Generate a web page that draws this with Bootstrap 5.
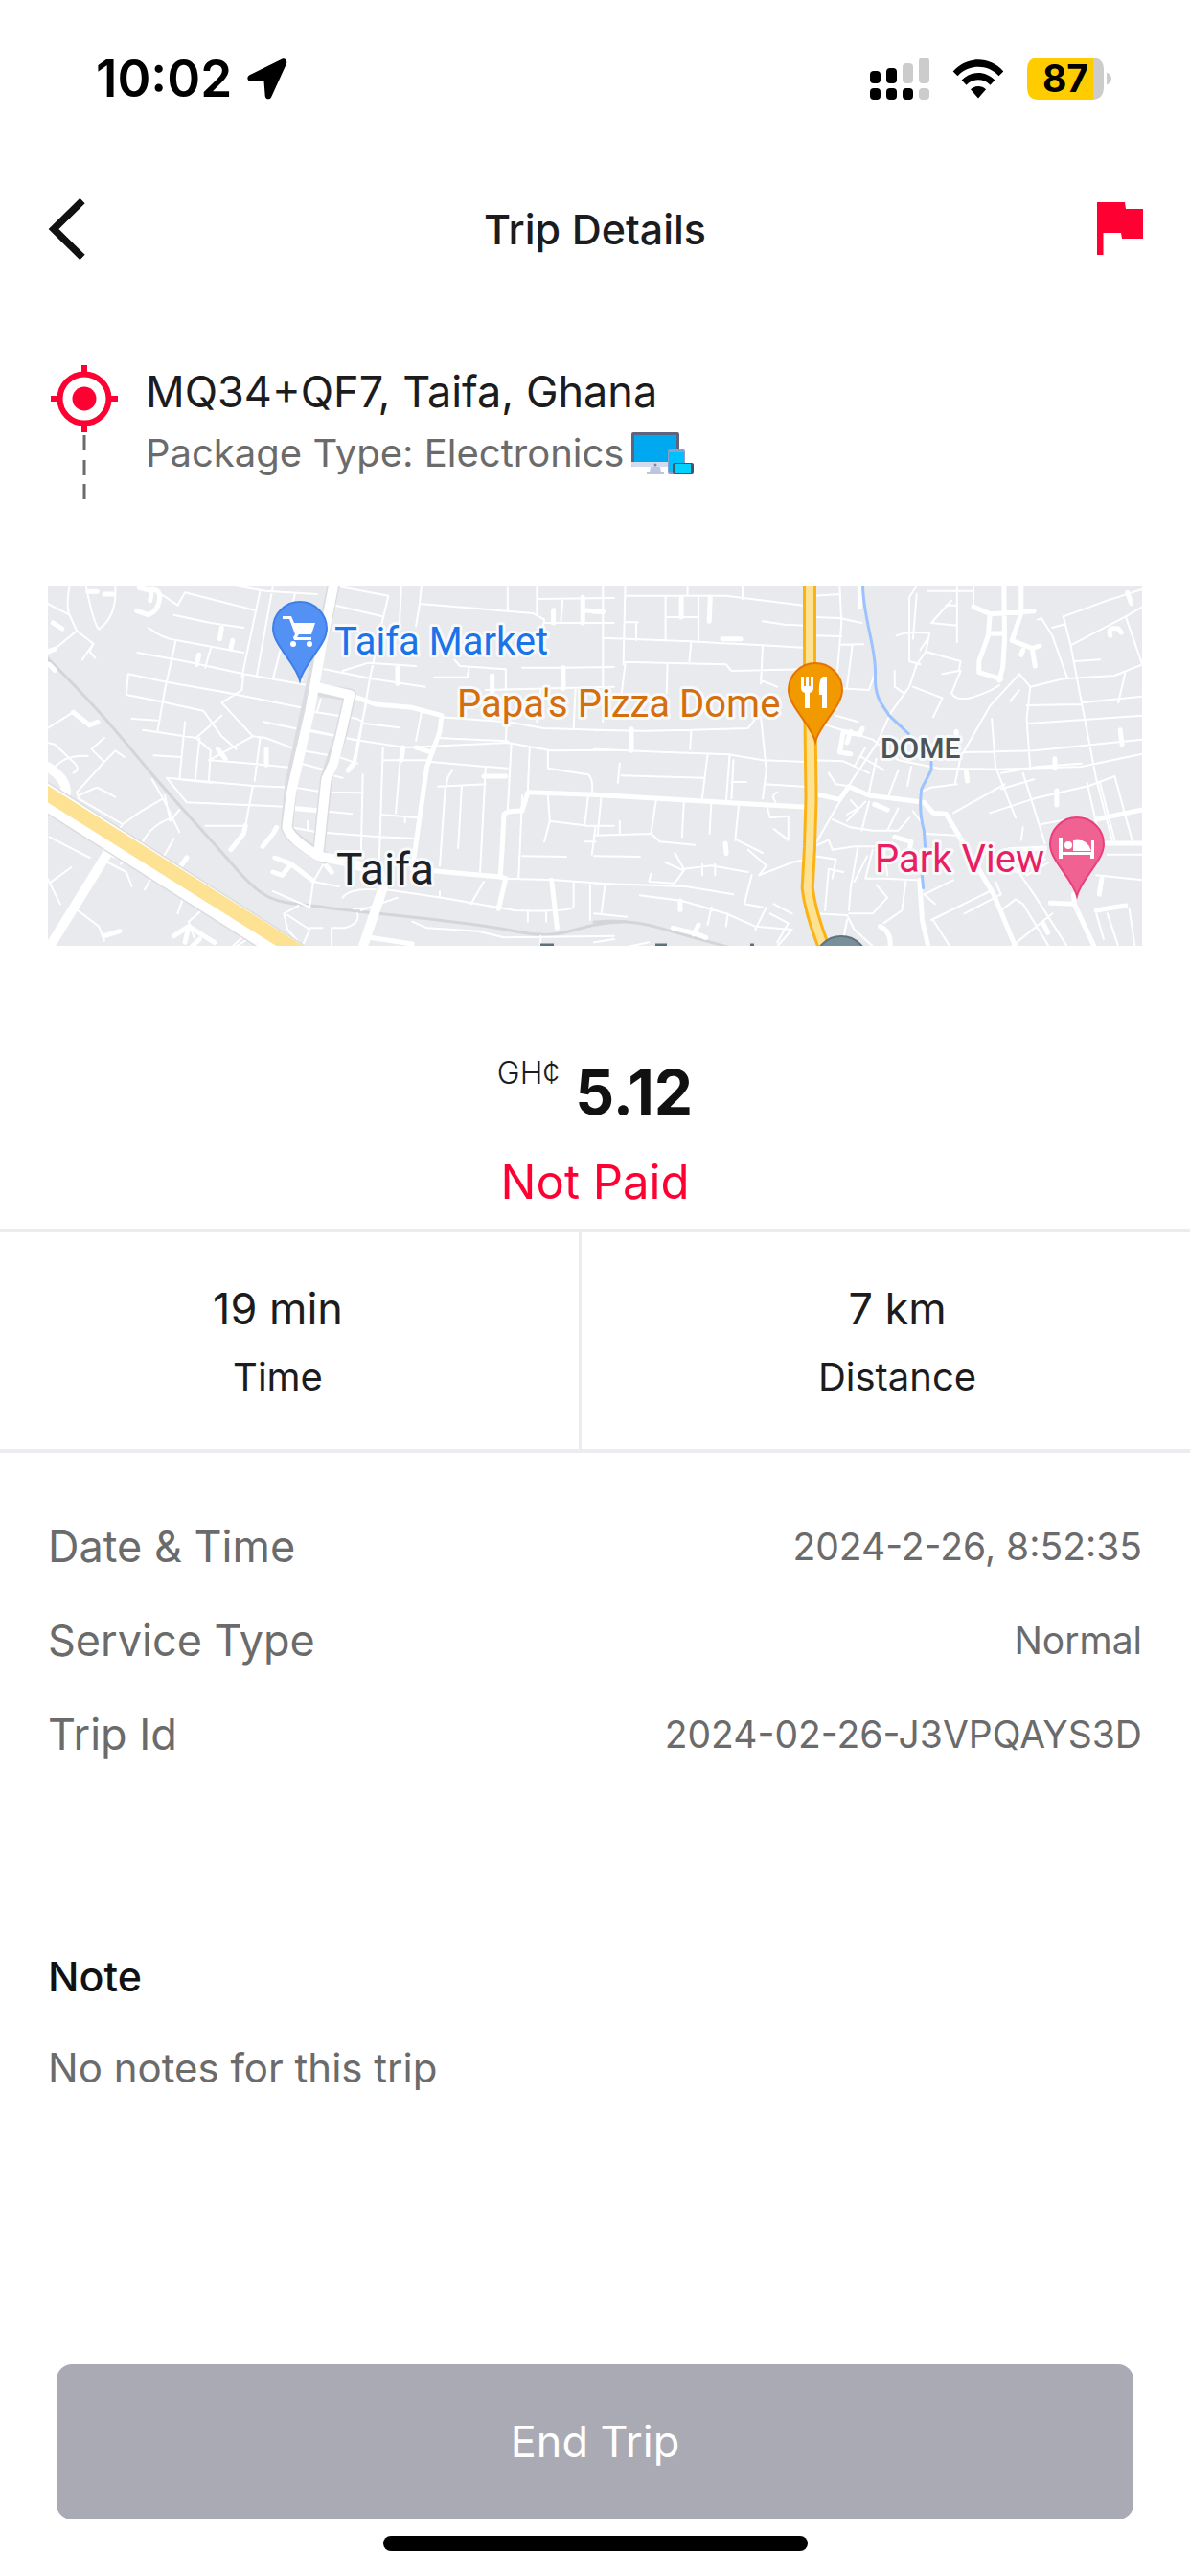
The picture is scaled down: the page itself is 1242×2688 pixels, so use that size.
<!DOCTYPE html>
<html lang="en">
<head>
<meta charset="utf-8">
<meta name="viewport" content="width=device-width, initial-scale=1">
<title>Trip Details</title>
<link href="https://cdn.jsdelivr.net/npm/bootstrap@5.3.0/dist/css/bootstrap.min.css" rel="stylesheet">
<script src="https://cdn.jsdelivr.net/npm/bootstrap@5.3.0/dist/js/bootstrap.bundle.min.js"></script>
<style>
  :root { --ink: #1c1c1e; --muted: #6b6b6b; --accent: #ff0033; --line: #ebebf0; }
  body { font-family: Inter, "Liberation Sans", sans-serif; color: var(--ink); background: #fff; }
  svg { display: block; flex-shrink: 0; }
  .status-bar { height: 164px; padding: 0 82px 0 100px; }
  .clock { font-size: 53px; line-height: 64px; font-weight: 600; color: #000; }
  .battery { width: 88px; height: 44px; }
  .battery-value { position: absolute; inset: 0 8px 0 0; font-size: 39px; line-height: 44px; font-weight: 700; color: #000; text-align: center; }
  .top-bar { height: 150px; padding: 0 49px; }
  .text-title { font-size: 43px; line-height: 60px; font-weight: 500; }
  .text-label { font-size: 45px; line-height: 60px; font-weight: 400; }
  .text-sub { font-size: 40px; line-height: 60px; font-weight: 400; }
  .text-value { font-size: 39px; line-height: 60px; font-weight: 400; }
  .text-unit { font-size: 40px; line-height: 56px; font-weight: 400; }
  .muted { color: var(--muted); }
  .origin { padding: 67px 50px 0 52px; gap: 28px; }
  .origin-title { font-size: 45px; line-height: 60px; margin-top: -2px; margin-bottom: 4px; }
  .map-box { padding: 0 50px; margin-top: 88px; }
  .map-box svg { width: 100%; height: auto; background: #e8eaed; }
  .fare { padding-top: 105px; }
  .currency { font-size: 32px; line-height: 56px; font-weight: 300; }
  .amount { font-size: 64px; line-height: 96px; font-weight: 700; color: #111; }
  .unpaid { font-size: 49px; line-height: 68px; color: var(--accent); margin-top: 12px; margin-bottom: 14px; }
  .stats { border-top: 4px solid var(--line); border-bottom: 4px solid var(--line); height: 234px; }
  .stats > div { padding-top: 50px; }
  .stat-left { width: 607px; border-right: 3px solid var(--line); padding-right: 24px; }
  .stat-right { padding-left: 24px; }
  .stat-gap { margin-top: 13px; }
  .details { padding: 68px 50px 0; }
  .details > div { height: 98px; }
  .details dt, .details dd { margin: 0; }
  .note { padding: 154px 50px 0; }
  .note p { margin-top: 36px; font-size: 42px; line-height: 60px; }
  .note h2 { color: #111; font-size: 43px; line-height: 60px; font-weight: 500; }
  .footer-bar { padding: 0 59px 26px; }
  .end-btn { height: 162px; border-radius: 16px; background: #aaaab4; color: #fff; border: 0; }
  .end-btn:hover { background: #9c9ca8; color: #fff; }
  .home-bar { width: 443px; height: 16px; border-radius: 8px; background: #000; margin-top: 17px; }
  .road path { fill: none; stroke: #fff; stroke-linecap: round; stroke-linejoin: round; vector-effect: non-scaling-stroke; }
  .lane { stroke-width: 2px; }
  .road path.street { stroke-width: 5px; }
  .road path.avenue { stroke-width: 10px; }
  .road path.shade { stroke: #dadce0; stroke-width: 13px; }
  .road path.shade-wide { stroke: #dadce0; stroke-width: 29px; }
  .road path.rail { stroke: #d3d5d9; stroke-width: 3px; }
  .road path.hw-case { stroke: #fff; stroke-width: 26px; }
  .road path.hw { stroke: #fde293; stroke-width: 15px; stroke-linecap: butt; }
  .road path.trunk-case { stroke: #fbb214; stroke-width: 14px; stroke-linecap: butt; }
  .road path.trunk { stroke: #fde293; stroke-width: 8px; stroke-linecap: butt; }
  .road path.river { stroke: #9cc3ff; stroke-width: 3px; }
  .map-label { font-family: Roboto, "Liberation Sans", sans-serif; font-size: 40px; paint-order: stroke; stroke: #f8f9fa; stroke-width: 6px; stroke-linejoin: round; }
  .map-town { font-size: 46px; fill: #202124; }
  .map-area { font-size: 30px; font-weight: 500; fill: #4a5459; }
</style>
</head>
<body class="d-flex flex-column min-vh-100">

<div class="status-bar d-flex align-items-center justify-content-between">
  <div class="d-flex align-items-center">
    <span class="clock">10:02</span>
    <svg class="ms-3" width="42" height="43" viewBox="0 0 42 43" aria-hidden="true"><path d="M36 .8 2.5 17.2C-.8 19-.2 23.6 3.6 23.8L17.500 24 18.700 39C19 43 24 43.600 25.400 39.800L41 5.500C42.200 1.800 39-.7 36 .8Z"/></svg>
  </div>
  <div class="d-flex align-items-center">
    <svg width="62" height="44" viewBox="0 0 62 44" aria-label="Signal"><g><rect y="14" width="11" height="13" rx="4"/><rect x="17" y="11" width="11" height="16" rx="4"/><rect y="32" width="11" height="12" rx="4"/><rect x="17" y="32" width="11" height="12" rx="4"/><rect x="34" y="32" width="11" height="12" rx="4"/></g><g fill="#ccc"><rect x="34" y="6" width="11" height="21" rx="4"/><rect x="51" width="11" height="27" rx="4"/><rect x="51" y="32" width="11" height="12" rx="4"/></g></svg>
    <svg class="mx-4" width="54" height="41" viewBox="0 0 54 41" aria-label="Wi-Fi"><path d="M.7 12.500C15-3.700 39-3.700 53.300 12.500L48.500 17.300C37 4.700 17 4.700 5.500 17.300Z"/><path d="M9.700 21.500C19.500 11.500 34.500 11.500 44.300 21.500L39.500 26.800C32.500 19.500 21.500 19.500 14.500 26.800Z"/><path d="M19 31.200C23.500 27 30.500 27 35 31.200L27 40.500Z"/></svg>
    <div class="battery position-relative">
      <svg width="88" height="44" viewBox="0 0 88 44" aria-hidden="true"><path d="M12 0H69V44H12Q0 44 0 31V13Q0 0 12 0Z" fill="#ffcc00"/><path d="M69 0Q80 1 80 13V31Q80 43 69 44ZM83 15.500Q88 18 88 22T83 28.500Z" fill="#ccc"/></svg>
      <span class="battery-value">87</span>
    </div>
  </div>
</div>

<header class="top-bar d-flex align-items-center justify-content-between">
  <a href="#" aria-label="Back"><svg width="48" height="64" viewBox="0 0 48 64"><path d="M37 2.500 7 32 37 61.500" fill="none" stroke="#111" stroke-width="7.500"/></svg></a>
  <h1 class="text-title m-0">Trip Details</h1>
  <a href="#" aria-label="Report"><svg width="48" height="56" viewBox="0 0 48 56"><path d="M0 0H29L30 7H48V38H26L25 32H6.500V55H0Z" fill="#ff0033"/></svg></a>
</header>

<section class="origin d-flex align-items-start">
  <svg width="72" height="142" viewBox="0 0 72 142" aria-hidden="true"><g stroke="#ff0033" stroke-width="6" fill="none"><circle cx="36" cy="35" r="25.500"/><path d="M36 0V9M36 61V70M1 35H10M62 35H71"/></g><circle cx="36" cy="35" r="12.500" fill="#ff0033"/><path d="M36 73V89M36 99V115M36 124V140" stroke="#6b6b6b" stroke-width="3"/></svg>
  <div>
    <div class="origin-title">MQ34+QF7, Taifa, Ghana</div>
    <div class="d-flex align-items-center gap-2 text-sub muted">Package Type: Electronics
      <svg width="66" height="45" viewBox="0 0 66 45" aria-hidden="true"><rect width="50" height="36" rx="2" fill="#5c6480"/><rect x="3" y="3" width="44" height="28" fill="#00a8f0"/><path d="M0 31H50V34Q50 36 48 36H2Q0 36 0 34Z" fill="#d3dcee"/><path d="M20 36H30L31 42H34V44H16V42H19Z" fill="#bcc7df"/><circle cx="25" cy="34" r="1.500" fill="#7d88a5"/><rect x="38" y="18" width="18" height="26" rx="2" fill="#8aa0c8"/><rect x="39" y="21" width="16" height="20" fill="#00c0ff"/><rect x="43" y="32" width="22" height="12" rx="2" fill="#46506a"/><rect x="46" y="33" width="16" height="10" fill="#00d2ff"/></svg>
    </div>
  </div>
</section>

<section class="map-box">
<svg viewBox="0 0 1142 376" role="img" aria-label="Map of Taifa">
  <rect width="1142" height="376" fill="#e8eaed"/>
  <!-- west half -->
  <g class="road" transform="translate(-10 -11) scale(.38265 .33333)">
    <path class="rail" d="M20 255C150 400 220 500 300 610S450 800 540 920S660 1020 780 1040S1150 1080 1300 1115S1450 1090 1600 1085"/>
    <g class="lane">
      <path d="M85 34Q75 100 85 125L25 90M85 125 105 175 150 215 120 265M105 175 30 245M130 34Q150 150 165 170Q215 130 210 34M150 215 140 240 155 260M335 60 380 95 400 55 470 75 590 110M370 125 470 150 560 165M300 165Q340 200 380 205L560 243M270 243 400 270 560 310 760 350M245 310 240 375 330 395 450 425 500 505 540 545M245 310 350 335 500 365 730 418M500 400 585 505 465 580M500 400 555 360 560 310M540 34 620 50 760 60M605 50 555 320M640 34 595 320M700 60 640 325M720 330 700 300M375 205 345 360 325 490M470 230 455 290"/>
      <path d="M255 450 325 455M285 485 430 510 470 550 465 645M430 510 500 440M400 460 385 640M440 510 428 640M315 565 390 570M350 635 585 660 690 665M350 635 405 712 670 725M385 640 470 650M470 580 580 590 690 603M605 510 590 645M615 460 700 480 860 515 1000 540 1280 525 1400 550 1570 548M585 505 620 510 700 545 820 570M585 660 565 785 455 785M25 480 95 430M25 525 45 530 100 590Q115 610 95 620M45 600Q80 560 135 567M180 510 145 545 180 585 105 680 110 700 230 780 280 740 340 700 310 640M180 585 210 550 235 570M110 690 160 665 210 695M340 700 385 805M345 690 360 770 385 735M230 780 200 830M30 820 140 885M30 965 90 915M190 900 240 930 255 975M225 905 245 870M200 880 235 895M370 825 290 985M285 835Q310 780 365 760M410 960 380 1060M90 1035 165 1100 180 1145M460 1035 410 1085 425 1135 M460 1035 530 1080M25 950 60 1030"/>
      <path d="M810 34 955 65 935 160 905 320 865 585M990 34 985 160M810 95 940 130M1045 34 1040 90 1350 120 1380 140 1370 200M1040 90 1030 160M1280 40V110M1360 34V120M1360 75 1570 72M1430 80 1425 150M1380 150 1570 150M780 295 910 325 1055 350M830 300 900 275 1030 285M1080 320H1170L1175 290M1135 265 1150 285 1275 295V360M1320 290 1430 290 1570 288M1220 360 1570 350M1540 34V460M1465 360 1460 480M1370 360 1360 460M735 425 870 450 890 465 985 478M770 390 760 430M720 480 860 515M700 585 780 610M895 400 860 580M1045 430 1030 520M1100 445 1280 460 1380 480 1570 487M1280 400 1275 520 1290 530 1280 740M1090 510 1280 520M1340 540 1335 680M1390 550V605L1500 625Q1515 640 1510 690M940 540 930 890M940 580 1060 580M990 540 975 745M885 625 880 880M1070 585 1220 600 1280 605M1220 600 1205 930M1130 610Q1110 640 1115 660M1090 662 1220 655M1155 660 1145 855M1110 665 1095 910M820 570 870 590M830 635 780 620M700 665 780 680 885 682M770 738 855 748M690 790 760 805 930 820 1030 825M735 770V800M935 750 1035 760M1000 760V775M1320 690 1310 950M1390 690 1395 770 1380 835M1395 770 1500 785 1570 785M1500 690 1490 785 1520 785 1510 875M1320 880 1440 882M1490 835H1520M1270 950 1410 955 1570 968"/>
      <path d="M640 990 740 1040 750 960 780 900M950 985 1100 1010 1300 1050Q1450 1055 1460 1040V960M830 1010Q850 980 920 985M860 1045 930 1040M1215 960 1180 1030M1335 1050V1085M1385 1055V1085M1505 970V1080M1095 990V1010M710 1035 670 1060 680 1110 720 1162M680 1065 740 1110 720 1162M740 1105 775 1105M870 1060Q880 1090 835 1105H800V1162M1020 1085 1060 1105 1200 1115 1270 1135 1570 1130M1370 1130V1162M600 1120 540 1162M470 1040 540 1085M530 1162 580 1110M750 960 820 975M880 1050 980 1010"/>
    </g>
    <path class="street" d="M275 40 310 50 305 80M310 45Q335 45 330 80T300 125L268 112M135 52H160M180 60H205M25 240 45 232M30 280 45 298M40 150 65 168M500 165 495 200M530 205 525 232M438 250 432 280M95 430 140 470 162 460M490 545 510 575M622 545V595M860 590 845 612M1030 540 1070 555M995 540 990 580M1485 70V150M1485 110 1540 115M1405 110V150M1432 290V355M1238 315V370M980 290V340M1215 630H1275M565 785 560 810 525 860M650 790 640 810 612 850M645 885 690 905 665 940 640 930M690 905 750 958M785 910 800 930M405 885 388 912M180 1130 222 1115M370 1130 410 1100 400 1150M410 1100 480 1150M440 1140 420 1162"/>
    <path class="street" d="M860 380 920 405 1020 415 1100 440 1095 490 1060 600 1040 760 1020 920 1260 945 1265 860 1270 750Q1275 738 1320 738L1335 680 1570 690M1260 945 1275 950 1255 1045M1400 955 1415 1105M905 1135 1020 1155M690 730 770 738"/>
    <path class="shade" d="M805 34 690 650 678 790Q690 830 780 885M765 360 850 375 825 500 785 640 765 860"/>
    <path class="avenue" d="M805 34 775 210 740 430 690 680 678 790Q690 830 765 880L830 895 930 930 940 980 885 1165M755 350 850 375 825 500 805 590 785 640 765 860"/>
    <path class="avenue" d="M200 850 30 1165M25 600Q80 640 75 685"/>
    <path class="shade-wide" d="M0 680 700 1190"/>
    <path class="hw-case" d="M0 680 700 1190"/>
    <path class="hw" d="M-10 660 740 1200"/>
  </g>
  <!-- east half -->
  <g class="road" transform="translate(570 -11) scale(.38265 .33333)">
    <path class="rail" d="M0 1087Q90 1075 180 1105T400 1175"/>
    <g class="lane">
      <path d="M85 34 80 280M85 65H360L580 97M255 34V65M195 70V205M285 70V205M405 34V75M115 150V205M120 148H85M195 132H285M25 197 260 208 460 220 580 228M265 208 260 270M460 145 520 155 580 158M460 220 455 340M80 272 360 280 375 300 580 295M200 280 198 370M85 280 75 370M455 330 500 350M0 485 135 488 265 485 420 480 440 450M265 485 262 545M0 545 200 555 370 562 460 580 580 585M370 562 360 715M455 445 470 610 460 700M70 590 65 650M75 628 300 635M310 560 295 700M380 580 375 700M375 648H415M465 655 580 663M500 680Q480 690 495 710M20 690 10 810M70 770V810M170 700 155 810 180 835 275 845M0 815 155 810M245 710 240 820M320 710 315 810M395 715 385 830M470 715 480 760 530 755V830L490 795M0 880 125 882M220 870 245 920 320 910 420 930M195 900 245 925 220 965 150 960 155 935M295 905V940M330 905V940M420 860 470 910 450 940 540 900 580 890M390 830 460 870M0 965 250 975 380 1000M30 970 20 1060M0 1060 90 1070M125 1003 240 1020 360 1060 440 1100 540 1110M320 1040 310 1095M365 1060 360 1100M470 1040 440 1110M480 1060 530 1090 500 1150M490 1030 540 1060M540 1110 500 1162M0 1150 55 1140M100 1162 150 1150M430 940 410 1030 460 1040"/>
      <path d="M600 65 670 60M670 34 675 150 660 350M600 132 670 135 730 150M600 190 675 192M675 218 735 217M705 218 690 350M600 350 750 360 765 310M880 34 860 70V270L890 280M880 60 870 200M990 34V210M910 50H1030M1035 34V95M960 95H990M975 80 920 150 990 158M825 190Q850 175 915 182L905 240 1000 270 995 300 950 310M905 240 880 280 860 350 810 430 770 530 700 650 600 850M890 235 910 200M820 300V350L845 370M870 350 950 385 925 445M1000 300 975 370Q990 400 1040 380T1105 345M1160 310 1080 410 1000 570 985 650M1160 310 1190 350 1180 450 1190 610M1220 135 1250 190 1290 320M1210 140 1220 135M1250 165 1280 155M1280 130 1400 80 1495 45M1280 130 1300 220 1330 400 1370 640 1415 840M1300 220 1450 130 1495 100M1450 130 1495 280M1310 270 1380 265M1190 350 1280 325 1420 315 1495 280M1180 408 1330 405M1185 465 1495 440M1010 555 1200 550 1495 515M1330 400 1495 380M1450 300 1430 400M950 605 1100 608 1330 600 1495 560M1085 450 1095 600 1150 760M1110 620 1210 600 1330 590M1170 620 1230 840M1080 745 1200 700 1350 660 1420 630 1470 840M1200 640 1110 670M980 745 1120 655M1345 650 1380 830M1380 650 1420 830M1220 780 1340 755M1170 790 1165 830M1135 395 1160 360"/>
      <path d="M640 620 660 655 690 660M600 580 680 583 750 620M660 440 720 460M620 465 760 515 830 580 960 610M730 570 790 610M710 600 740 540M770 575 750 680M830 610 800 700M865 600 855 660M740 710 690 770M700 705 720 730 690 750M650 765 700 790 760 800 830 800 860 760M750 710 730 800M830 730 800 800M870 740 890 770M640 830 650 860 710 850 790 850 800 940M600 850 640 830M720 850 700 980 695 1050M745 880 710 960M680 930 640 920 630 1050M760 860 740 950 790 950 880 955M600 880 660 890 650 950M770 970 800 1010 760 1060 695 1060M850 960 840 1050 790 1090M600 1060 690 1065 710 1110 760 1162M690 1080 680 1140M890 680 920 665 990 655M905 810 990 815 1015 850M900 1000 980 955M900 1000 930 1030M920 1080 1080 990M925 1080 970 1162M1095 960 1110 1000 1010 1060M1140 900 1200 1000 1290 1162M1150 930 1230 890M1180 940 1240 900M1110 1050 1150 1015 1170 1030 1240 1162M1140 1162 1250 1060M1370 940 1495 955M1400 1060 1430 1162M1460 1045 1475 1162M1370 1060 1390 1140M1400 875H1495"/>
    </g>
    <path class="street" d="M0 115H25M238 70V132M317 70 314 145M350 200H400M102 482V550M0 688 580 727M358 840 361 872M235 1020V1048M215 1105 270 1120 305 1135M285 1095 272 1125M605 686 670 703 695 662 750 690 900 712 925 745 960 748 1090 1000 1150 1165M888 955 895 1080 912 1165M725 34V100M1118 34 1120 200 1115 290 1105 330M1035 100 1080 122 1075 190 1050 270V305L1110 325M1080 122 1200 113M1165 34V120L1140 205 1195 230 1203 285M1165 250 1170 235M1195 230 1215 222M1080 183H1120M1408 190Q1400 160 1430 168L1438 180M1455 55 1465 88M1435 485 1440 530M1257 575V605M1262 675V720M1015 615 1018 645M988 490V510M1495 735 1370 765M1395 840H1495M1130 860 1230 855M1308 1000 1310 1030 1245 1027M1310 1030 1365 1165M1385 950 1378 1000M1370 1050 1420 1040 1450 1035M1225 1090 1238 1120M765 718 800 735M820 820 865 835 860 860M780 1100Q810 1115 808 1162M680 490 670 555 700 560M680 490 725 500 732 480M690 525 700 490"/>
    <path class="river" d="M733 34C735 140 770 230 767 310S790 410 805 440L858 497M920 585V610L893 670Q885 740 900 800L903 850M893 920 898 980"/>
    <path class="trunk-case" d="M588 30V330L592 700 588 850 582 980Q590 1060 632 1180"/>
    <path class="trunk" d="M588 30V330L592 700 588 850 582 980Q590 1060 632 1180"/>
  </g>
  <circle cx="828" cy="394" r="28" fill="#78909c" stroke="#60737d" stroke-width="2"/>
  <path d="M514 375h14M634 375h12M733 375h4" stroke="#5d727d" stroke-width="3"/>
  <g stroke-width="2">
    <path d="M263 99C258 80 235 62 235 45A28 28 0 1 1 291 45C291 62 268 80 263 99Z" fill="#5491f5" stroke="#3f7fe8"/>
    <path d="M801 163C796 144 773 126 773 109A28 28 0 1 1 829 109C829 126 806 144 801 163Z" fill="#f29900" stroke="#e37400"/>
    <path d="M1074 324C1069 305 1046 287 1046 270A28 28 0 1 1 1102 270C1102 287 1079 305 1074 324Z" fill="#f06292" stroke="#e93f7d"/>
  </g>
  <g fill="#fff">
    <path d="M245 32H254L257 39H279L275 51H262L260 54H275V57H257L256 54 258 51 252 35H245Z"/><circle cx="256" cy="61" r="3"/><circle cx="273" cy="61" r="3"/>
    <path d="M786 95h3v10h2v-10h3v10h2v-10h3v12q0 4-4 5v16h-5v-16q-4-1-4-5ZM813 95v33h-5v-14h-3q-1-16 4-19Z"/>
    <path d="M1055 263h4v15h33v7h-4v-4h-29v4h-4ZM1070 266q15-3 19 11h-19ZM1089 266h3v19h-3Z"/><circle cx="1065" cy="271" r="4"/>
  </g>
  <text class="map-label" x="299" y="72" fill="#1a73e8">Taifa Market</text>
  <text class="map-label" x="427" y="137" fill="#d56e0c">Papa's Pizza Dome</text>
  <text class="map-label" x="863" y="299" fill="#e91e63">Park View</text>
  <text class="map-label map-town" x="301" y="312">Taifa</text>
  <text class="map-label map-area" x="869" y="180">DOME</text>
</svg>
</section>

<section class="fare text-center">
  <div class="d-flex justify-content-center gap-3">
    <span class="currency">GH¢</span><span class="amount">5.12</span>
  </div>
  <div class="unpaid">Not Paid</div>
</section>

<section class="stats d-flex text-center">
  <div class="stat-left"><div class="text-label">19 min</div><div class="text-unit stat-gap">Time</div></div>
  <div class="stat-right flex-grow-1"><div class="text-label">7 km</div><div class="text-unit stat-gap">Distance</div></div>
</section>

<dl class="details muted m-0">
  <div class="d-flex justify-content-between"><dt class="text-label">Date &amp; Time</dt><dd class="text-value">2024-2-26, 8:52:35</dd></div>
  <div class="d-flex justify-content-between"><dt class="text-label">Service Type</dt><dd class="text-value">Normal</dd></div>
  <div class="d-flex justify-content-between"><dt class="text-label">Trip Id</dt><dd class="text-value">2024-02-26-J3VPQAYS3D</dd></div>
</dl>

<section class="note">
  <h2 class="m-0">Note</h2>
  <p class="muted mb-0">No notes for this trip</p>
</section>

<footer class="footer-bar mt-auto">
  <button type="button" class="btn end-btn w-100 text-label">End Trip</button>
  <div class="home-bar mx-auto"></div>
</footer>
</body>
</html>
